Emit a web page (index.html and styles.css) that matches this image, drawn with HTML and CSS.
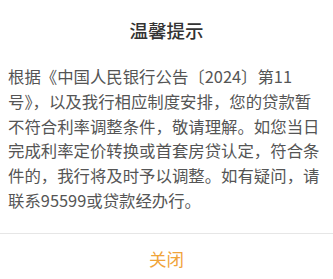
FILE: index.html
```html
<!DOCTYPE html>
<html lang="zh-CN">
<head>
<meta charset="utf-8">
<link rel="stylesheet" href="styles.css">
</head>
<body>
<div class="dialog">
  <div class="title">温馨提示</div>
  <div class="content">根据《中国人民银行公告〔2024〕第11<br>号》，以及我行相应制度安排，您的贷款暂<br>不符合利率调整条件，敬请理解。如您当日<br>完成利率定价转换或首套房贷认定，符合条<br>件的，我行将及时予以调整。如有疑问，请<br>联系95599或贷款经办行。</div>
  <div class="footer"><span class="close">关闭</span></div>
</div>
</body>
</html>
```
FILE: styles.css
```css
html, body {
  margin: 0;
  padding: 0;
  background: #ffffff;
}
body {
  font-family: "Noto Sans CJK SC", "Noto Sans", sans-serif;
  width: 333px;
  overflow: hidden;
}
.dialog {
  display: flex;
  flex-direction: column;
}
.title {
  padding-top: 18px;
  font-size: 18.5px;
  line-height: 24px;
  font-weight: 500;
  color: #333333;
  text-align: center;
}
.content {
  margin-top: 22px;
  padding: 0 8px;
  font-size: 16.4px;
  line-height: 24.75px;
  color: #555555;
  white-space: nowrap;
}
.footer {
  margin-top: 20px;
  border-top: 1px solid #e6e6e6;
  height: 50px;
  display: flex;
  align-items: center;
  justify-content: center;
}
.close {
  font-size: 17.5px;
  color: #f0a43a;
}
```
